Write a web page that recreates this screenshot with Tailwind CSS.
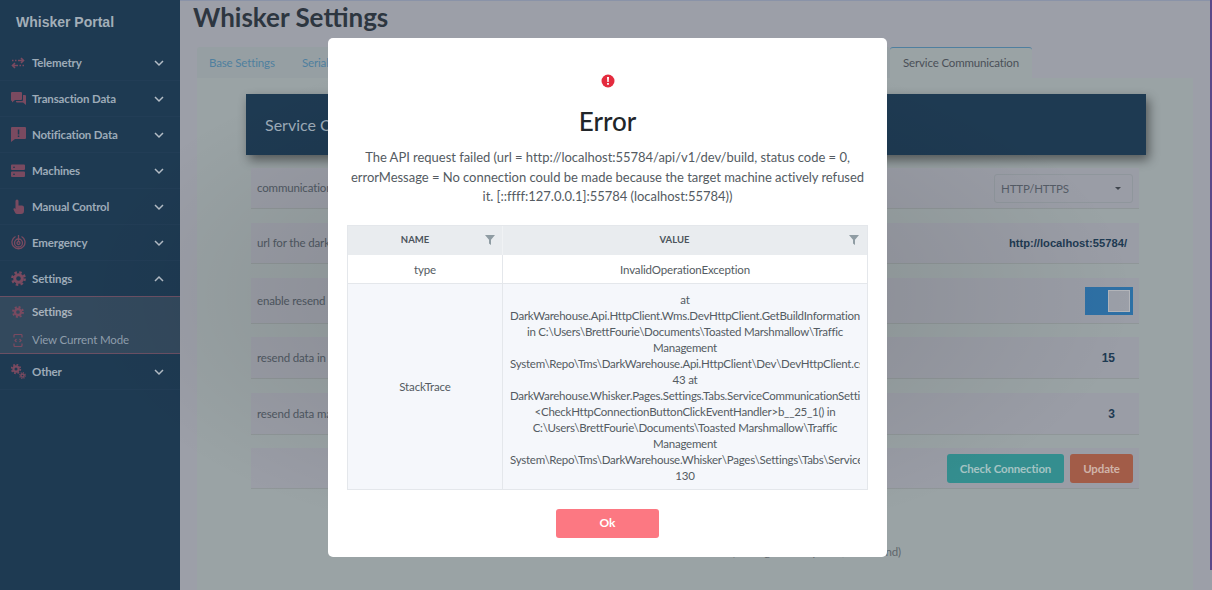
<!DOCTYPE html>
<html lang="en">
<head>
    <meta charset="UTF-8">
    <meta name="viewport" content="width=device-width, initial-scale=1.0">
    <title>Whisker Settings</title>
    <script src="https://cdn.jsdelivr.net/npm/@tailwindcss/browser@4"></script>
</head>
<body class="font-['Lato',sans-serif] bg-[#9c9fa8]">
<div class="relative flex h-[590px] w-[1212px] overflow-hidden">

    <!-- sidebar -->
    <aside class="w-[180px] shrink-0 bg-[#1e3a52] text-[11.500px] font-bold tracking-[-0.15px] text-[#9dabb8]">
        <div class="h-[45px] pl-[16px] pt-[13px] font-['Liberation_Sans',sans-serif] text-[14px] leading-[19px] font-bold tracking-normal text-[#a3aeb8]">Whisker Portal</div>

        <div class="flex h-[36px] items-center border-b border-[#223d56] pl-[11px] pr-[16px]">
            <svg class="mr-[7px] h-[14px] w-[14px] fill-none stroke-[#7a4a60]" viewBox="0 0 14 14" stroke-width="1.6"><path d="M1 4.500h1.500M4 4.500h1.500M7 4.500h5M10 2l2.500 2.500L10 7M13 9.500h-1.500M10 9.500H8.500M7 9.500H2M4 7L1.500 9.500 4 12"/></svg>
            <span class="flex-1 pt-[1px]">Telemetry</span>
            <svg class="h-[10px] w-[10px] fill-none stroke-[#b4bdc6]" viewBox="0 0 10 10" stroke-width="1.5"><path d="M1 3l4 4 4-4"/></svg>
        </div>
        <div class="flex h-[36px] items-center border-b border-[#223d56] pl-[11px] pr-[16px]">
            <svg class="mr-[6px] h-[15px] w-[15px] fill-[#7a4a60]" viewBox="0 0 15 15"><path d="M1 1h9a1 1 0 0 1 1 1v6a1 1 0 0 1-1 1H4l-3 2.500V9.900a1 1 0 0 1-1-1V2a1 1 0 0 1 1-1z"/><path d="M12 4h2a1 1 0 0 1 1 1v9l-3-2.500H6a1 1 0 0 1-1-1V10h6a1 1 0 0 0 1-1z"/></svg>
            <span class="flex-1 pt-[1px]">Transaction Data</span>
            <svg class="h-[10px] w-[10px] fill-none stroke-[#b4bdc6]" viewBox="0 0 10 10" stroke-width="1.5"><path d="M1 3l4 4 4-4"/></svg>
        </div>
        <div class="flex h-[36px] items-center border-b border-[#223d56] pl-[11px] pr-[16px]">
            <svg class="mr-[6px] h-[15px] w-[15px]" viewBox="0 0 15 15"><path class="fill-[#7a4a60]" d="M1 0h13a1 1 0 0 1 1 1v10a1 1 0 0 1-1 1H4l-4 3V1a1 1 0 0 1 1-1z"/><path class="fill-[#1e3a52]" d="M6.800 2.500h1.500v5H6.800zM6.800 8.500h1.500V10H6.800z"/></svg>
            <span class="flex-1">Notification Data</span>
            <svg class="h-[10px] w-[10px] fill-none stroke-[#b4bdc6]" viewBox="0 0 10 10" stroke-width="1.5"><path d="M1 3l4 4 4-4"/></svg>
        </div>
        <div class="flex h-[36px] items-center border-b border-[#223d56] pl-[11px] pr-[16px]">
            <svg class="mr-[6px] h-[15px] w-[15px]" viewBox="0 0 15 15"><path class="fill-[#7a4a60]" d="M1 1.500h12a1 1 0 0 1 1 1v3.500a1 1 0 0 1-1 1H1a1 1 0 0 1-1-1V2.500a1 1 0 0 1 1-1zM1 8.500h12a1 1 0 0 1 1 1V13a1 1 0 0 1-1 1H1a1 1 0 0 1-1-1V9.500a1 1 0 0 1 1-1z"/><path class="fill-[#1e3a52]" d="M2 3.800h2v1H2zM2 10.800h2v1H2z"/></svg>
            <span class="flex-1">Machines</span>
            <svg class="h-[10px] w-[10px] fill-none stroke-[#b4bdc6]" viewBox="0 0 10 10" stroke-width="1.5"><path d="M1 3l4 4 4-4"/></svg>
        </div>
        <div class="flex h-[36px] items-center border-b border-[#223d56] pl-[11px] pr-[16px]">
            <svg class="mr-[6px] h-[15px] w-[15px] fill-[#7a4a60]" viewBox="0 0 15 15"><path d="M6 .5a1.500 1.500 0 0 1 1.500 1.500v4.500h3.500a2 2 0 0 1 2 2V12a3 3 0 0 1-3 3H6a2 2 0 0 1-2-1.500L2.500 10.500c-.4-1 .8-1.800 1.500-1L4.500 10V2A1.500 1.500 0 0 1 6 .5z"/></svg>
            <span class="flex-1">Manual Control</span>
            <svg class="h-[10px] w-[10px] fill-none stroke-[#b4bdc6]" viewBox="0 0 10 10" stroke-width="1.5"><path d="M1 3l4 4 4-4"/></svg>
        </div>
        <div class="flex h-[36px] items-center border-b border-[#223d56] pl-[11px] pr-[16px]">
            <svg class="mr-[6px] h-[15px] w-[15px] fill-none stroke-[#7a4a60]" viewBox="0 0 15 15" stroke-width="1.300"><path d="M4.500 1.500a6.500 6.500 0 1 0 6 0"/><circle cx="7.500" cy="8" r="4"/><circle cx="7.500" cy="8" r="1.500"/><path d="M7.500 0v6"/></svg>
            <span class="flex-1">Emergency</span>
            <svg class="h-[10px] w-[10px] fill-none stroke-[#b4bdc6]" viewBox="0 0 10 10" stroke-width="1.5"><path d="M1 3l4 4 4-4"/></svg>
        </div>
        <div class="flex h-[35px] items-center pl-[11px] pr-[16px]">
            <svg class="mr-[6px] h-[15px] w-[15px] fill-none stroke-[#7a4a60]" viewBox="0 0 15 15"><circle cx="7.500" cy="7.500" r="3.800" stroke-width="3"/><circle cx="7.500" cy="7.500" r="6.200" stroke-width="2.400" stroke-dasharray="2.500 2.370"/></svg>
            <span class="flex-1">Settings</span>
            <svg class="h-[10px] w-[10px] fill-none stroke-[#b4bdc6]" viewBox="0 0 10 10" stroke-width="1.5"><path d="M1 7l4-4 4 4"/></svg>
        </div>

        <div class="h-[58px] border-y border-[#6b5064] bg-[#33495d]">
            <div class="flex h-[29px] items-center pl-[12px] text-[#a8b2bc]">
                <svg class="mr-[8px] h-[12px] w-[12px] fill-none stroke-[#7a4a60]" viewBox="0 0 15 15"><circle cx="7.500" cy="7.500" r="3.800" stroke-width="3"/><circle cx="7.500" cy="7.500" r="6.200" stroke-width="2.400" stroke-dasharray="2.500 2.370"/></svg>
                <span>Settings</span>
            </div>
            <div class="flex h-[28px] items-center pl-[13px] font-normal text-[#8f9eac]">
                <svg class="mr-[9px] h-[13px] w-[10px] fill-none stroke-[#7a4a60]" viewBox="0 0 10 13" stroke-width="1.200"><path d="M1 3.500V1.500a1 1 0 0 1 1-1h6a1 1 0 0 1 1 1v2M1 9.500v2a1 1 0 0 0 1 1h6a1 1 0 0 0 1-1v-2M3.500 5L2 6.500 3.500 8M6.500 5L8 6.500 6.500 8"/></svg>
                <span>View Current Mode</span>
            </div>
        </div>

        <div class="flex h-[36px] items-center border-b border-[#223d56] pl-[11px] pr-[16px]">
            <svg class="mr-[6px] h-[15px] w-[15px] fill-none stroke-[#7a4a60]" viewBox="0 0 15 15"><circle cx="5" cy="5" r="2.600" stroke-width="2.200"/><circle cx="5" cy="5" r="4.300" stroke-width="1.800" stroke-dasharray="1.700 1.680"/><circle cx="11.500" cy="11.500" r="1.600" stroke-width="1.500"/><circle cx="11.500" cy="11.500" r="2.800" stroke-width="1.300" stroke-dasharray="1.100 1.100"/></svg>
            <span class="flex-1 pt-[1px]">Other</span>
            <svg class="h-[10px] w-[10px] fill-none stroke-[#b4bdc6]" viewBox="0 0 10 10" stroke-width="1.5"><path d="M1 3l4 4 4-4"/></svg>
        </div>
    </aside>

    <!-- page -->
    <main class="min-w-0 flex-1 border-t border-[#8a93a8] pl-[17px] pr-[19px]">
        <h1 class="-ml-[4px] h-[46px] text-[26px] leading-[32px] font-bold text-[#2d3640]">Whisker Settings</h1>

        <div class="flex h-[31px] items-center text-[11.500px] tracking-[-0.15px] text-[#4f7f9f]">
            <div class="flex h-full w-[693px] items-center rounded-t-[3px] bg-[#969fa3] pt-[1px]">
                <span class="ml-[12px] w-[93px]">Base Settings</span>
                <span>Serial</span>
            </div>
            <span class="flex h-[31px] w-[142px] items-center justify-center rounded-t-[3px] border-t border-[#4f7f9f] bg-[#9aa3a5] text-[#4a5058]">Service Communication</span>
        </div>

        <div class="h-[512px] bg-[#9aa3a5] pt-[16px]">
            <div class="ml-[49px] mr-[47px] flex h-[61px] items-center bg-[#1e3a52] pl-[19px] text-[16px] text-[#9dabb8] shadow-[3px_5px_10px_rgba(0,0,0,.45)]">Service Communication</div>

            <div class="ml-[54px] mr-[54px] mt-[13px] text-[11.500px] tracking-[-0.15px] text-[#4f5862]">
                <div class="flex h-[41px] items-center justify-between border-b border-[#8f9698] bg-[#9a9da6] pl-[6px] pr-[6px]">
                    <span>communication</span>
                    <div class="flex h-[29px] w-[139px] items-center justify-between rounded-[3px] border border-[#8f969c] pl-[6px] pr-[11px] pt-[1px] text-[#555c66]">HTTP/HTTPS
                        <span class="h-0 w-0 border-x-[3.5px] border-t-[3.5px] border-x-transparent border-t-[#3f454d]"></span>
                    </div>
                </div>
                <div class="mt-[14px] flex h-[41px] items-center justify-between border-b border-[#8f9698] bg-[#9a9da6] pl-[6px] pr-[12px]">
                    <span>url for the dark</span>
                    <span class="font-['Liberation_Sans',sans-serif] text-[11.200px] font-bold tracking-normal text-[#1e3a52]">http://localhost:55784/</span>
                </div>
                <div class="mt-[14px] flex h-[46px] items-center justify-between border-b border-[#8f9698] bg-[#9a9da6] pl-[6px] pr-[6px]">
                    <span>enable resend</span>
                    <div class="flex h-[28px] w-[48px] items-center justify-end bg-[#2e70a5] pr-[3px]"><div class="h-[22px] w-[22px] border border-[#b3b5ba] bg-[#9b9fa8]"></div></div>
                </div>
                <div class="mt-[13px] flex h-[42px] items-center justify-between border-b border-[#8f9698] bg-[#9a9da6] pl-[6px] pr-[24px]">
                    <span>resend data in</span>
                    <span class="font-['Liberation_Sans',sans-serif] text-[12px] font-bold tracking-normal text-[#1e3a52]">15</span>
                </div>
                <div class="mt-[14px] flex h-[42px] items-center justify-between border-b border-[#8f9698] bg-[#9a9da6] pl-[6px] pr-[24px]">
                    <span>resend data max</span>
                    <span class="font-['Liberation_Sans',sans-serif] text-[12px] font-bold tracking-normal text-[#1e3a52]">3</span>
                </div>
                <div class="mt-[13px] flex h-[41px] items-center justify-end gap-[6px] border-b border-[#8f9698] bg-[#9a9da6] pr-[6px]">
                    <div class="flex h-[29px] w-[117px] items-center justify-center rounded-[3px] bg-[#348e8f] pt-[1px] font-bold text-[#a5c4c4]">Check Connection</div>
                    <div class="flex h-[29px] w-[63px] items-center justify-center rounded-[3px] bg-[#a25c48] pt-[1px] font-bold text-[#d0b3a8]">Update</div>
                </div>
                <div class="mt-[54px] pr-[238px] text-right text-[#5f666c]">(waiting for a response, 60 second)</div>
            </div>
        </div>
    </main>

    <!-- scrollbar edge -->
    <div class="absolute right-0 top-0 h-[570px] w-[2px] bg-[#5a4a8a]"></div>

    <!-- error dialog -->
    <div class="absolute inset-0 flex justify-center bg-[radial-gradient(ellipse_at_center,rgba(0,0,0,.16),rgba(0,0,0,0)_62%)] pl-[3px]">
        <div class="mt-[38px] h-[519px] w-[559px] rounded-[5px] bg-white px-[19px] text-center text-[#545b62]">
            <svg class="mx-auto mt-[36px] h-[14px] w-[14px]" viewBox="0 0 14 14"><circle cx="7" cy="7" r="6.500" fill="#e42b3e"/><path fill="#fff" d="M6 3h2l-.3 5H6.300zM6.100 9h1.800v1.800H6.100z"/></svg>
            <h2 class="mt-[13px] text-[26px] leading-[40px] font-medium text-[#212529]">Error</h2>
            <p class="mt-[7px] text-[13px] leading-[19.500px] tracking-[-0.03px]">The API request failed (url = http://localhost:55784/api/v1/dev/build, status code = 0, errorMessage = No connection could be made because the target machine actively refused it. [::ffff:127.0.0.1]:55784 (localhost:55784))</p>

            <div class="mt-[18px] border border-[#e4e7eb] text-[11.500px] tracking-[-0.15px]">
                <div class="flex h-[29px] bg-[#e9ecef] text-[9.500px] font-bold tracking-normal text-[#4c545c]">
                    <div class="flex w-[155px] items-center border-r border-[#f0f2f4] px-[7px]">
                        <span class="flex-1 pr-[10px]">NAME</span>
                        <svg class="h-[10px] w-[10px] fill-[#8f9ca3]" viewBox="0 0 10 10"><path d="M0 0h10L6 4.800V10L4 8.500V4.800z"/></svg>
                    </div>
                    <div class="flex flex-1 items-center pr-[8px]">
                        <span class="flex-1 pr-[3px]">VALUE</span>
                        <svg class="h-[10px] w-[10px] fill-[#8f9ca3]" viewBox="0 0 10 10"><path d="M0 0h10L6 4.800V10L4 8.500V4.800z"/></svg>
                    </div>
                </div>
                <div class="flex h-[29px] items-center border-b border-[#e4e7eb]">
                    <div class="flex h-full w-[155px] items-center justify-center border-r border-[#e4e7eb] pt-[2px]">type</div>
                    <div class="flex-1 pt-[2px]">InvalidOperationException</div>
                </div>
                <div class="flex h-[205px] bg-[#f5f7fb]">
                    <div class="flex w-[155px] items-center justify-center border-r border-[#e4e7eb] pt-[2px]">StackTrace</div>
                    <div class="min-w-0 flex-1 px-[7px] py-[8px]">
                        <div class="overflow-hidden whitespace-nowrap leading-[16px] tracking-[-0.25px]">
                            at<br>
                            DarkWarehouse.Api.HttpClient.Wms.DevHttpClient.GetBuildInformation<br>
                            in C:\Users\BrettFourie\Documents\Toasted Marshmallow\Traffic<br>
                            Management<br>
                            System\Repo\Tms\DarkWarehouse.Api.HttpClient\Dev\DevHttpClient.cs<br>
                            43 at<br>
                            DarkWarehouse.Whisker.Pages.Settings.Tabs.ServiceCommunicationSettings<br>
                            &lt;CheckHttpConnectionButtonClickEventHandler&gt;b__25_1() in<br>
                            C:\Users\BrettFourie\Documents\Toasted Marshmallow\Traffic<br>
                            Management<br>
                            System\Repo\Tms\DarkWarehouse.Whisker\Pages\Settings\Tabs\ServiceCommunication<br>
                            130
                        </div>
                    </div>
                </div>
            </div>

            <button class="mt-[19px] h-[29px] w-[103px] rounded-[3px] bg-[#fc7882] text-[12px] font-bold text-white">Ok</button>
        </div>
    </div>
</div>
</body>
</html>
